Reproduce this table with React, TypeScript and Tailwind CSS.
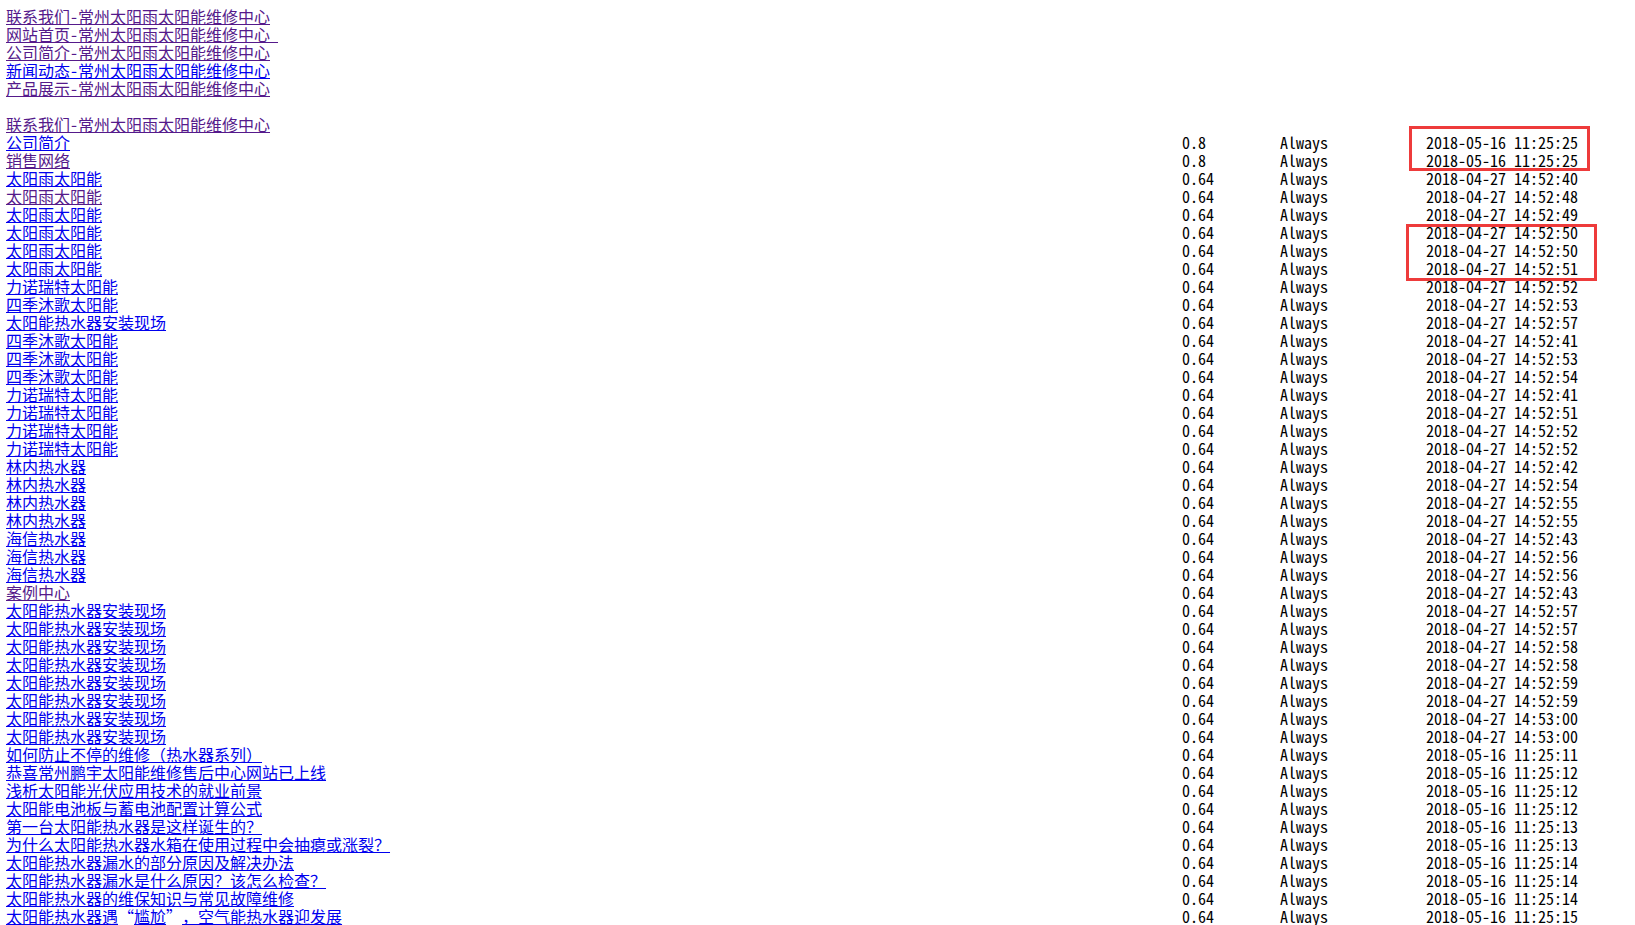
import React from "react";

type Row = { t: React.ReactNode; p: string; d: string; v?: boolean };

const topLinks: { t: string; v: boolean }[] = [
  { t: "联系我们-常州太阳雨太阳能维修中心", v: true },
  { t: "网站首页-常州太阳雨太阳能维修中心\u00a0", v: true },
  { t: "公司简介-常州太阳雨太阳能维修中心", v: true },
  { t: "新闻动态-常州太阳雨太阳能维修中心", v: false },
  { t: "产品展示-常州太阳雨太阳能维修中心", v: true },
];

const A = "2018-04-27 ";
const B = "2018-05-16 ";

const lastTitle = (
  <>
    太阳能热水器遇
    <span className="inline-block w-[16px] text-right">“</span>
    尴尬
    <span className="inline-block w-[16px] text-left">”</span>
    ，空气能热水器迎发展
  </>
);

const rows: Row[] = [
  { t: "公司简介", p: "0.8", d: B + "11:25:25" },
  { t: "销售网络", p: "0.8", d: B + "11:25:25", v: true },
  { t: "太阳雨太阳能", p: "0.64", d: A + "14:52:40" },
  { t: "太阳雨太阳能", p: "0.64", d: A + "14:52:48", v: true },
  { t: "太阳雨太阳能", p: "0.64", d: A + "14:52:49" },
  { t: "太阳雨太阳能", p: "0.64", d: A + "14:52:50" },
  { t: "太阳雨太阳能", p: "0.64", d: A + "14:52:50" },
  { t: "太阳雨太阳能", p: "0.64", d: A + "14:52:51" },
  { t: "力诺瑞特太阳能", p: "0.64", d: A + "14:52:52" },
  { t: "四季沐歌太阳能", p: "0.64", d: A + "14:52:53" },
  { t: "太阳能热水器安装现场", p: "0.64", d: A + "14:52:57" },
  { t: "四季沐歌太阳能", p: "0.64", d: A + "14:52:41" },
  { t: "四季沐歌太阳能", p: "0.64", d: A + "14:52:53" },
  { t: "四季沐歌太阳能", p: "0.64", d: A + "14:52:54" },
  { t: "力诺瑞特太阳能", p: "0.64", d: A + "14:52:41" },
  { t: "力诺瑞特太阳能", p: "0.64", d: A + "14:52:51" },
  { t: "力诺瑞特太阳能", p: "0.64", d: A + "14:52:52" },
  { t: "力诺瑞特太阳能", p: "0.64", d: A + "14:52:52" },
  { t: "林内热水器", p: "0.64", d: A + "14:52:42" },
  { t: "林内热水器", p: "0.64", d: A + "14:52:54" },
  { t: "林内热水器", p: "0.64", d: A + "14:52:55" },
  { t: "林内热水器", p: "0.64", d: A + "14:52:55" },
  { t: "海信热水器", p: "0.64", d: A + "14:52:43" },
  { t: "海信热水器", p: "0.64", d: A + "14:52:56" },
  { t: "海信热水器", p: "0.64", d: A + "14:52:56" },
  { t: "案例中心", p: "0.64", d: A + "14:52:43", v: true },
  { t: "太阳能热水器安装现场", p: "0.64", d: A + "14:52:57" },
  { t: "太阳能热水器安装现场", p: "0.64", d: A + "14:52:57" },
  { t: "太阳能热水器安装现场", p: "0.64", d: A + "14:52:58" },
  { t: "太阳能热水器安装现场", p: "0.64", d: A + "14:52:58" },
  { t: "太阳能热水器安装现场", p: "0.64", d: A + "14:52:59" },
  { t: "太阳能热水器安装现场", p: "0.64", d: A + "14:52:59" },
  { t: "太阳能热水器安装现场", p: "0.64", d: A + "14:53:00" },
  { t: "太阳能热水器安装现场", p: "0.64", d: A + "14:53:00" },
  { t: "如何防止不停的维修（热水器系列）", p: "0.64", d: B + "11:25:11" },
  { t: "恭喜常州鹏宇太阳能维修售后中心网站已上线", p: "0.64", d: B + "11:25:12" },
  { t: "浅析太阳能光伏应用技术的就业前景", p: "0.64", d: B + "11:25:12" },
  { t: "太阳能电池板与蓄电池配置计算公式", p: "0.64", d: B + "11:25:12" },
  { t: "第一台太阳能热水器是这样诞生的？", p: "0.64", d: B + "11:25:13" },
  { t: "为什么太阳能热水器水箱在使用过程中会抽瘪或涨裂？", p: "0.64", d: B + "11:25:13" },
  { t: "太阳能热水器漏水的部分原因及解决办法", p: "0.64", d: B + "11:25:14" },
  { t: "太阳能热水器漏水是什么原因？该怎么检查？", p: "0.64", d: B + "11:25:14" },
  { t: "太阳能热水器的维保知识与常见故障维修", p: "0.64", d: B + "11:25:14" },
  { t: lastTitle, p: "0.64", d: B + "11:25:15" },
];

function Link({ text, visited }: { text: React.ReactNode; visited?: boolean }) {
  return (
    <a
      href="#"
      className={
        visited
          ? "text-[#551a8b] underline whitespace-pre"
          : "text-[#0000ee] underline whitespace-pre"
      }
    >
      {text}
    </a>
  );
}

export default function App() {
  return (
    <div className="relative min-h-[925px] bg-white font-['Noto_Sans_Mono_CJK_SC','Noto_Sans_CJK_SC',monospace] text-[16px] leading-[18px] text-black">
      <div className="flex flex-col pl-[6px] pt-[7px]">
        {topLinks.map((l, i) => (
          <div key={i} className="h-[18px]">
            <Link text={l.t} visited={l.v} />
          </div>
        ))}
        <div className="h-[18px]" />
        <div className="h-[18px]">
          <Link text="联系我们-常州太阳雨太阳能维修中心" visited />
        </div>
        {rows.map((r, i) => (
          <div key={i} className="grid h-[18px] grid-cols-[1176px_98px_146px_auto]">
            <div>
              <Link text={r.t} visited={r.v} />
            </div>
            <div>{r.p}</div>
            <div>Always</div>
            <div>{r.d}</div>
          </div>
        ))}
      </div>
      <div className="pointer-events-none absolute left-[1409px] top-[126px] h-[45px] w-[181px] border-[3px] border-[#ee3b3b]" />
      <div className="pointer-events-none absolute left-[1406px] top-[224px] h-[57px] w-[191px] border-[3px] border-[#ee3b3b]" />
    </div>
  );
}
